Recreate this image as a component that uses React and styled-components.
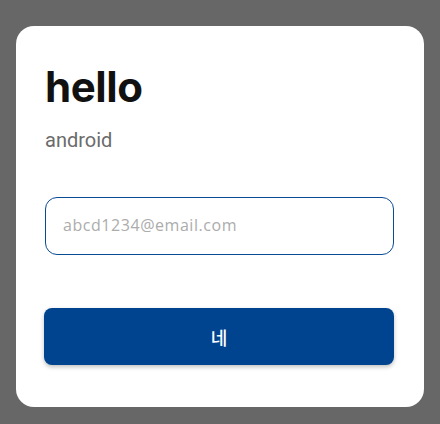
import React from "react";
import styled, { createGlobalStyle } from "styled-components";

const Global = createGlobalStyle`
  html, body { margin: 0; padding: 0; background: #676767; }
  body { font-family: Roboto, "Noto Sans", sans-serif; }
  * { box-sizing: border-box; }
`;

const Screen = styled.div`
  width: 440px;
  height: 424px;
  background: #676767;
  padding: 26px 16px 17px 16px;
  display: flex;
`;

const Card = styled.div`
  flex: 1;
  background: #ffffff;
  border-radius: 18px;
  padding: 35px 30px 42px 28px;
  display: flex;
  flex-direction: column;
`;

const Title = styled.h1`
  margin: 0 0 0 1px;
  font-family: Inter, "Noto Sans", sans-serif;
  font-weight: 700;
  font-size: 42px;
  line-height: 52px;
  letter-spacing: -0.4px;
  color: #111111;
`;

const Subtitle = styled.p`
  margin: 15px 0 0 1px;
  font-family: Roboto, sans-serif;
  font-size: 20px;
  line-height: 24px;
  color: #6b6b6b;
`;

const EmailInput = styled.input`
  margin: 45px 0 0 1px;
  height: 58px;
  width: calc(100% - 1px);
  border: 1.6px solid #0b4a95;
  border-radius: 12px;
  padding: 0 16px 2px 17px;
  font-family: "Open Sans", sans-serif;
  font-size: 16px;
  letter-spacing: 0.55px;
  color: #222;
  outline: none;
  &::placeholder { color: #acacac; }
`;

const SubmitButton = styled.button`
  margin-top: 53px;
  height: 57px;
  width: 100%;
  border: none;
  border-radius: 8px;
  background: #00438f;
  color: #ffffff;
  font-family: "Noto Sans CJK KR", sans-serif;
  font-weight: 500;
  font-size: 18px;
  box-shadow: 0 2px 4px rgba(0, 0, 0, 0.25);
  cursor: pointer;
`;

export default function App() {
  return (
    <>
      <Global />
      <Screen>
        <Card>
          <Title>hello</Title>
          <Subtitle>android</Subtitle>
          <EmailInput placeholder="abcd1234@email.com" />
          <SubmitButton>네</SubmitButton>
        </Card>
      </Screen>
    </>
  );
}
